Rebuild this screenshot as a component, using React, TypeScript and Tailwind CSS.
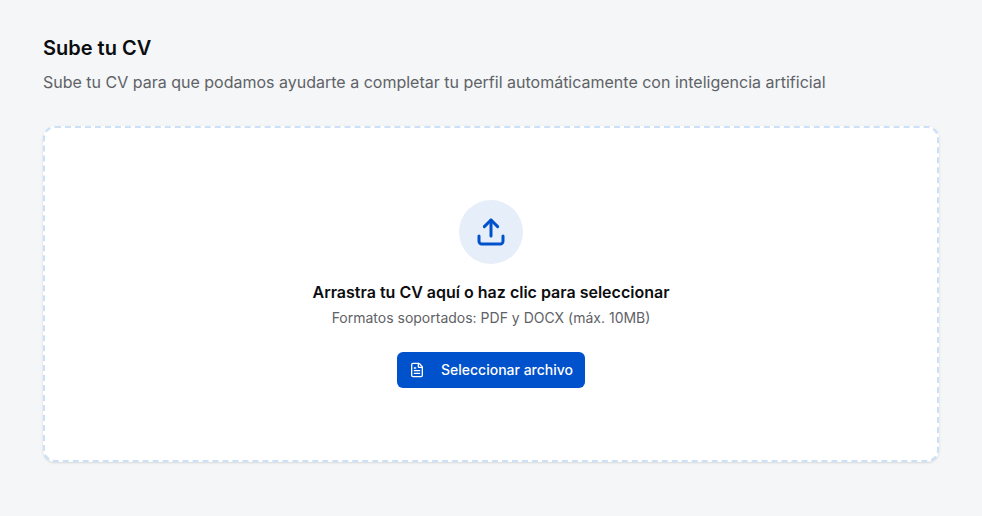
import React from 'react';
import { FileText, Upload } from 'lucide-react';

export default function App() {
  return (
    <div className="min-h-[516px] bg-[#f4f6f8] px-[43px] pt-[36px] font-['Inter',sans-serif] antialiased">
      <h2 className="text-[20px] leading-[24px] font-semibold text-[#0c0d10]">Sube tu CV</h2>
      <p className="mt-[10px] text-[16px] leading-[24px] text-[#606266]">
        Sube tu CV para que podamos ayudarte a completar tu perfil automáticamente con inteligencia artificial
      </p>

      {/* Drop zone */}
      <div className="mt-[32px] flex h-[336px] w-[896px] flex-col items-center rounded-xl border-2 border-dashed border-[#cce0f7] bg-white pt-[72px] shadow-sm">
        <div className="flex h-[64px] w-[64px] items-center justify-center rounded-full bg-[#e6eefa]">
          <Upload size={32} strokeWidth={2.25} className="text-[#0052cc]" />
        </div>
        <h3 className="mt-[17px] text-[16px] leading-[22px] font-semibold text-[#0c0d10]">
          Arrastra tu CV aquí o haz clic para seleccionar
        </h3>
        <p className="mt-[5px] text-[14px] leading-[20px] text-[#606266]">
          Formatos soportados: PDF y DOCX (máx. 10MB)
        </p>
        <button className="mt-[24px] flex h-[36px] items-center gap-[16px] rounded-md bg-[#0052cc] px-[12px] pb-[1px] text-[14px] font-medium text-white">
          <FileText size={16} />
          Seleccionar archivo
        </button>
      </div>
    </div>
  );
}
